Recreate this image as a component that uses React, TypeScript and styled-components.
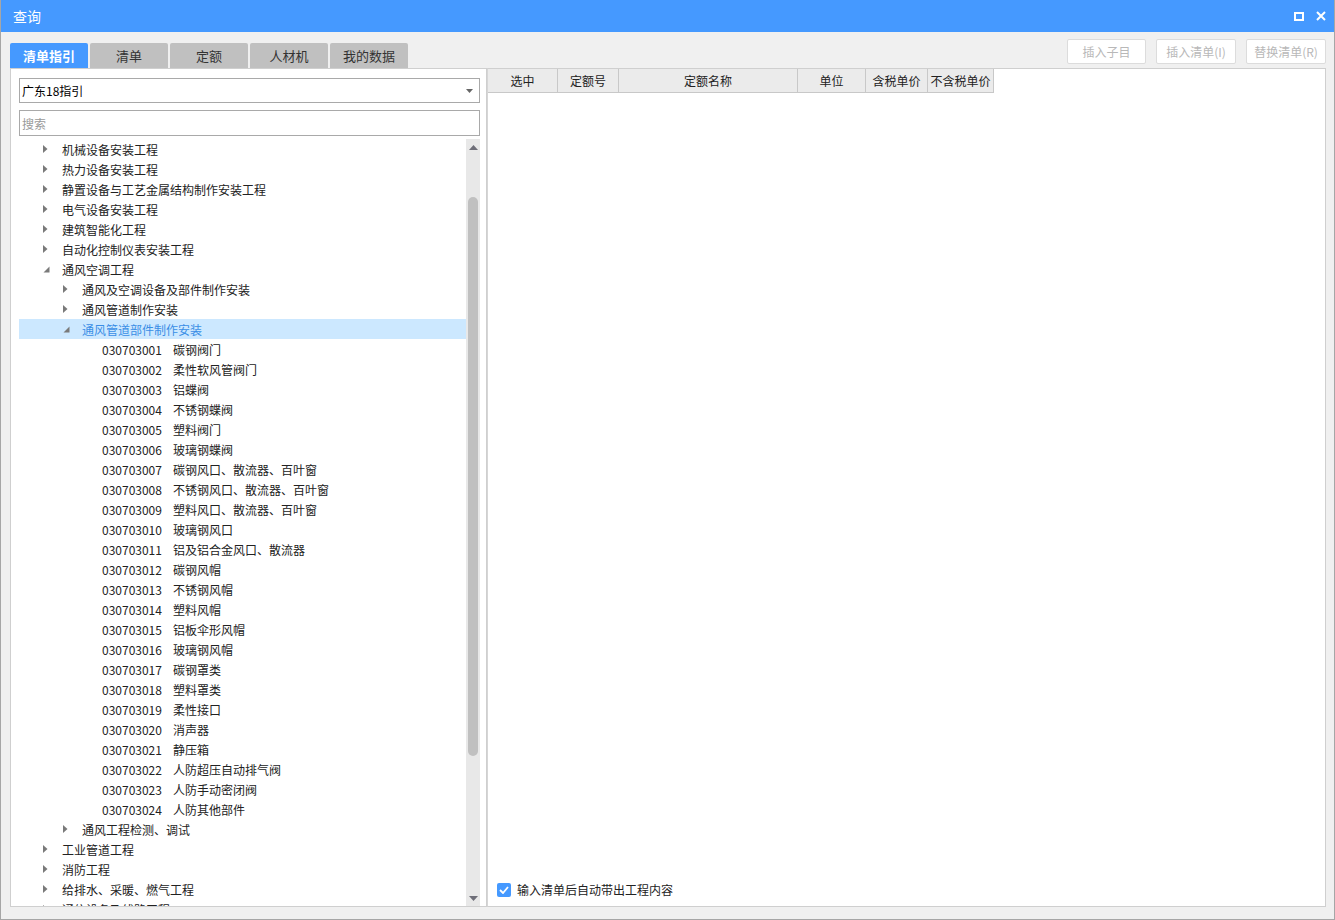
import React from "react";
import styled, { createGlobalStyle } from "styled-components";

const Global = createGlobalStyle`
  html, body { margin: 0; padding: 0; background: #f0f0f0; }
  body { font-family: "Microsoft YaHei", "Noto Sans CJK SC", "Noto Sans", sans-serif; }
  * { box-sizing: border-box; }
`;

const FONT = `"Microsoft YaHei", "Noto Sans CJK SC", sans-serif`;

const Window = styled.div`
  width: 1335px;
  height: 920px;
  border: 1px solid #a6a6a6;
  border-top: none;
  background: #f0f0f0;
  display: flex;
  flex-direction: column;
  overflow: hidden;
  position: relative;
`;

const TitleBar = styled.div`
  height: 32px;
  background: #4599ff;
  display: flex;
  align-items: center;
  justify-content: space-between;
  padding: 0 8px 0 12px;
  color: #fff;
  font-family: ${FONT};
  font-size: 14px;
  flex: none;
`;

const TitleIcons = styled.div`
  display: flex;
  align-items: center;
  gap: 12px;
`;

const Body = styled.div`
  flex: 1;
  display: flex;
  flex-direction: column;
  padding: 8px 8px 12px 9px;
  min-height: 0;
`;

const TopRow = styled.div`
  display: flex;
  justify-content: space-between;
  align-items: flex-end;
  height: 28px;
  flex: none;
`;

const Tabs = styled.div`
  display: flex;
  gap: 2px;
  align-items: flex-end;
`;

const Tab = styled.div<{ $active?: boolean }>`
  width: 78px;
  height: 25px;
  border-radius: 2px 2px 0 0;
  background: ${(p) => (p.$active ? "#4599ff" : "#c0c0c0")};
  color: ${(p) => (p.$active ? "#fff" : "#333")};
  font-weight: ${(p) => (p.$active ? "bold" : "normal")};
  font-family: ${FONT};
  font-size: 13px;
  display: flex;
  align-items: center;
  justify-content: center;
`;

const Buttons = styled.div`
  display: flex;
  gap: 10px;
  align-self: flex-start;
  margin-top: -1px;
`;

const DisabledButton = styled.div<{ $w: number }>`
  width: ${(p) => p.$w}px;
  height: 25px;
  border: 1px solid #dcdcdc;
  border-radius: 2px;
  background: #fff;
  color: #b8b8b8;
  font-family: ${FONT};
  font-size: 12px;
  display: flex;
  align-items: center;
  justify-content: center;
`;

const Main = styled.div`
  flex: 1;
  display: flex;
  min-height: 0;
`;

const LeftPanel = styled.div`
  width: 477px;
  background: #fff;
  border: 1px solid #cfcfcf;
  display: flex;
  flex-direction: column;
  padding: 9px 6px 0 8px;
  min-height: 0;
`;

const Select = styled.div`
  height: 25px;
  border: 1px solid #a9a9a9;
  display: flex;
  align-items: center;
  justify-content: space-between;
  padding: 0 6px 0 2px;
  font-family: ${FONT};
  font-size: 12px;
  color: #000;
  flex: none;
`;

const Search = styled.div`
  margin-top: 7px;
  height: 26px;
  border: 1px solid #a9a9a9;
  display: flex;
  align-items: center;
  padding: 0 2px;
  font-family: ${FONT};
  font-size: 12px;
  color: #9a9a9a;
  flex: none;
`;

const TreeWrap = styled.div`
  flex: 1;
  display: flex;
  margin-top: 3px;
  min-height: 0;
  overflow: hidden;
`;

const TreeList = styled.div`
  flex: 1;
  overflow: hidden;
  min-width: 0;
`;

const Row = styled.div<{ $level: number; $selected?: boolean }>`
  height: 20px;
  display: flex;
  align-items: center;
  padding-left: ${(p) => 24 + p.$level * 20}px;
  background: ${(p) => (p.$selected ? "#cce8ff" : "transparent")};
  color: ${(p) => (p.$selected ? "#3a8ee6" : "#222")};
  font-family: ${FONT};
  font-size: 12px;
  white-space: nowrap;
`;

const Caret = styled.span`
  width: 19px;
  display: inline-flex;
  align-items: center;
  flex: none;
`;

const Code = styled.span`
  display: inline-block;
  width: 71px;
  flex: none;
`;

const Scrollbar = styled.div`
  width: 14px;
  background: #e8e8e8;
  display: flex;
  flex-direction: column;
  align-items: center;
  flex: none;
`;

const ScrollArrow = styled.div`
  height: 16px;
  width: 100%;
  display: flex;
  align-items: center;
  justify-content: center;
  flex: none;
`;

const Thumb = styled.div`
  width: 10px;
  height: 559px;
  margin-top: 42px;
  border-radius: 5px;
  background: #c0c0c0;
  flex: none;
`;

const Spacer = styled.div`
  flex: 1;
`;

const RightPanel = styled.div`
  flex: 1;
  background: #fff;
  border: 1px solid #cfcfcf;
  border-left: 1px solid #d6d6d6;
  display: flex;
  flex-direction: column;
  min-height: 0;
`;

const HeaderRow = styled.div`
  display: flex;
  height: 24px;
  flex: none;
`;

const HeaderCell = styled.div<{ $w: number }>`
  width: ${(p) => p.$w}px;
  background: #ebebeb;
  border-right: 1px solid #c8c8c8;
  border-bottom: 1px solid #c8c8c8;
  display: flex;
  align-items: center;
  justify-content: center;
  font-family: ${FONT};
  font-size: 12px;
  color: #222;
  flex: none;
`;

const Footer = styled.div`
  display: flex;
  align-items: center;
  gap: 6px;
  padding: 0 0 8px 9px;
  font-family: ${FONT};
  font-size: 12px;
  color: #222;
`;

const CheckBox = styled.div`
  width: 14px;
  height: 14px;
  border-radius: 2px;
  background: #4599ff;
  display: flex;
  align-items: center;
  justify-content: center;
`;

const Grip = styled.div`
  position: absolute;
  right: 2px;
  bottom: 3px;
  width: 8px;
  height: 8px;
`;

const RightArrow = () => (
  <svg width="5" height="8" viewBox="0 0 5 8">
    <path d="M0 0 L4.5 4 L0 8 Z" fill="#7a7a7a" />
  </svg>
);

const DownArrow = () => (
  <svg width="7" height="7" viewBox="0 0 7 7">
    <path d="M6.5 0.5 L6.5 6.5 L0.5 6.5 Z" fill="#7a7a7a" />
  </svg>
);

type Node = { level: number; text: string; code?: string; caret?: "r" | "d"; selected?: boolean };

const leafs: [string, string][] = [
  ["030703001", "碳钢阀门"],
  ["030703002", "柔性软风管阀门"],
  ["030703003", "铝蝶阀"],
  ["030703004", "不锈钢蝶阀"],
  ["030703005", "塑料阀门"],
  ["030703006", "玻璃钢蝶阀"],
  ["030703007", "碳钢风口、散流器、百叶窗"],
  ["030703008", "不锈钢风口、散流器、百叶窗"],
  ["030703009", "塑料风口、散流器、百叶窗"],
  ["030703010", "玻璃钢风口"],
  ["030703011", "铝及铝合金风口、散流器"],
  ["030703012", "碳钢风帽"],
  ["030703013", "不锈钢风帽"],
  ["030703014", "塑料风帽"],
  ["030703015", "铝板伞形风帽"],
  ["030703016", "玻璃钢风帽"],
  ["030703017", "碳钢罩类"],
  ["030703018", "塑料罩类"],
  ["030703019", "柔性接口"],
  ["030703020", "消声器"],
  ["030703021", "静压箱"],
  ["030703022", "人防超压自动排气阀"],
  ["030703023", "人防手动密闭阀"],
  ["030703024", "人防其他部件"],
];

const nodes: Node[] = [
  { level: 0, text: "机械设备安装工程", caret: "r" },
  { level: 0, text: "热力设备安装工程", caret: "r" },
  { level: 0, text: "静置设备与工艺金属结构制作安装工程", caret: "r" },
  { level: 0, text: "电气设备安装工程", caret: "r" },
  { level: 0, text: "建筑智能化工程", caret: "r" },
  { level: 0, text: "自动化控制仪表安装工程", caret: "r" },
  { level: 0, text: "通风空调工程", caret: "d" },
  { level: 1, text: "通风及空调设备及部件制作安装", caret: "r" },
  { level: 1, text: "通风管道制作安装", caret: "r" },
  { level: 1, text: "通风管道部件制作安装", caret: "d", selected: true },
  ...leafs.map(([c, t]) => ({ level: 2, code: c, text: t })),
  { level: 1, text: "通风工程检测、调试", caret: "r" },
  { level: 0, text: "工业管道工程", caret: "r" },
  { level: 0, text: "消防工程", caret: "r" },
  { level: 0, text: "给排水、采暖、燃气工程", caret: "r" },
  { level: 0, text: "通信设备及线路工程", caret: "r" },
];

const columns: [string, number][] = [
  ["选中", 70],
  ["定额号", 61],
  ["定额名称", 179],
  ["单位", 68],
  ["含税单价", 62],
  ["不含税单价", 66],
];

export default function App() {
  return (
    <>
      <Global />
      <Window>
        <TitleBar>
          <span>查询</span>
          <TitleIcons>
            <svg width="10" height="9" viewBox="0 0 10 9">
              <rect x="1" y="1" width="8" height="7" fill="none" stroke="#fff" strokeWidth="2" />
            </svg>
            <svg width="10" height="10" viewBox="0 0 10 10">
              <path d="M1 1 L9 9 M9 1 L1 9" stroke="#fff" strokeWidth="2" />
            </svg>
          </TitleIcons>
        </TitleBar>
        <Body>
          <TopRow>
            <Tabs>
              <Tab $active>清单指引</Tab>
              <Tab>清单</Tab>
              <Tab>定额</Tab>
              <Tab>人材机</Tab>
              <Tab>我的数据</Tab>
            </Tabs>
            <Buttons>
              <DisabledButton $w={79}>插入子目</DisabledButton>
              <DisabledButton $w={80}>插入清单(I)</DisabledButton>
              <DisabledButton $w={80}>替换清单(R)</DisabledButton>
            </Buttons>
          </TopRow>
          <Main>
            <LeftPanel>
              <Select>
                <span>广东18指引</span>
                <svg width="7" height="4" viewBox="0 0 7 4">
                  <path d="M0 0 L7 0 L3.5 4 Z" fill="#666" />
                </svg>
              </Select>
              <Search>搜索</Search>
              <TreeWrap>
                <TreeList>
                  {nodes.map((n, i) => (
                    <Row key={i} $level={n.level} $selected={n.selected}>
                      <Caret>{n.caret === "r" ? <RightArrow /> : n.caret === "d" ? <DownArrow /> : null}</Caret>
                      {n.code ? <Code>{n.code}</Code> : null}
                      <span>{n.text}</span>
                    </Row>
                  ))}
                </TreeList>
                <Scrollbar>
                  <ScrollArrow>
                    <svg width="9" height="5" viewBox="0 0 9 5">
                      <path d="M4.5 0 L9 5 L0 5 Z" fill="#6e6e78" />
                    </svg>
                  </ScrollArrow>
                  <Thumb />
                  <Spacer />
                  <ScrollArrow>
                    <svg width="9" height="5" viewBox="0 0 9 5">
                      <path d="M0 0 L9 0 L4.5 5 Z" fill="#6e6e78" />
                    </svg>
                  </ScrollArrow>
                </Scrollbar>
              </TreeWrap>
            </LeftPanel>
            <RightPanel>
              <HeaderRow>
                {columns.map(([t, w]) => (
                  <HeaderCell key={t} $w={w}>
                    {t}
                  </HeaderCell>
                ))}
              </HeaderRow>
              <Spacer />
              <Footer>
                <CheckBox>
                  <svg width="10" height="8" viewBox="0 0 10 8">
                    <path d="M1 4 L4 7 L9 1" fill="none" stroke="#fff" strokeWidth="1.8" />
                  </svg>
                </CheckBox>
                <span>输入清单后自动带出工程内容</span>
              </Footer>
            </RightPanel>
          </Main>
        </Body>
        <Grip>
          <svg width="8" height="8" viewBox="0 0 8 8">
            <rect x="6" y="0" width="2" height="2" fill="#9a9a9a" />
            <rect x="3" y="3" width="2" height="2" fill="#9a9a9a" />
            <rect x="6" y="3" width="2" height="2" fill="#9a9a9a" />
            <rect x="0" y="6" width="2" height="2" fill="#9a9a9a" />
            <rect x="3" y="6" width="2" height="2" fill="#9a9a9a" />
            <rect x="6" y="6" width="2" height="2" fill="#9a9a9a" />
          </svg>
        </Grip>
      </Window>
    </>
  );
}
